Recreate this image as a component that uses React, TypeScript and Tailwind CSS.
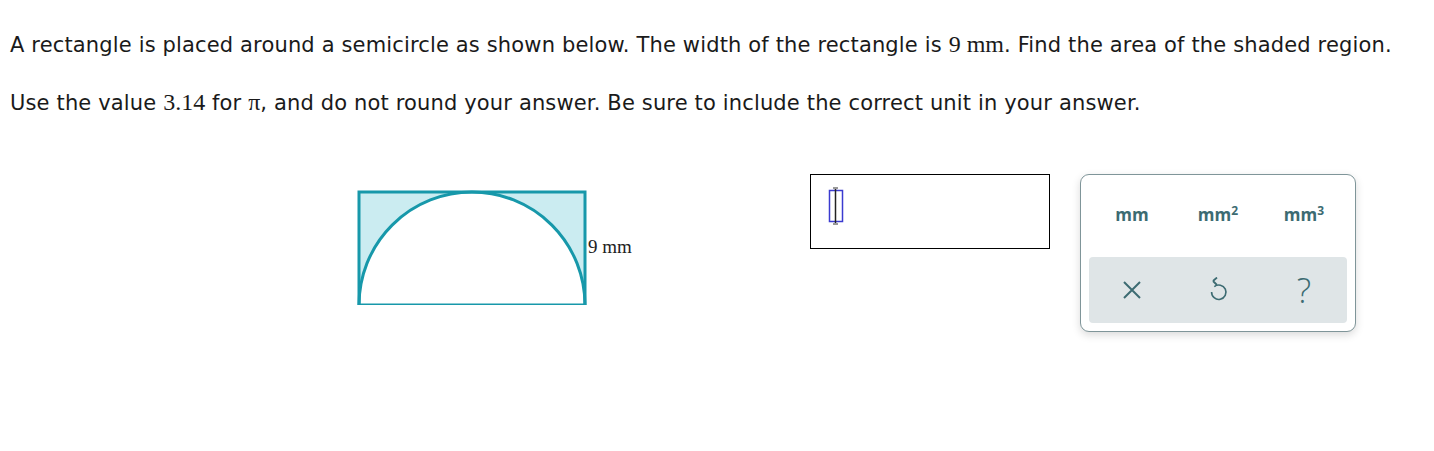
import React from 'react'

const Figure: React.FC = () => (
  <div className="relative w-[300px] h-[130px]">
    <svg width="240" height="130" viewBox="0 0 240 130" className="absolute left-0 top-0">
      <rect x="2" y="17" width="226" height="113" fill="#cbecf1" stroke="none" />
      <path d="M2,130 A113,113 0 0 1 228,130 Z" fill="#ffffff" />
      <rect x="2" y="17" width="226" height="113" fill="none" stroke="#1798aa" strokeWidth="3" />
      <path d="M2,130 A113,113 0 0 1 228,130" fill="none" stroke="#1798aa" strokeWidth="3" />
    </svg>
    <span className="absolute left-[231px] top-[58px] font-['Liberation_Serif',serif] text-[19px] text-[#222]">9 mm</span>
  </div>
)

const App: React.FC = () => {
  return (
    <div className="w-[1434px] h-[451px] bg-white font-['DejaVu_Sans',sans-serif] text-[#1a1a1a]">
      <div className="pl-[10px] pt-[29px] tracking-[0.15px]">
        <p className="text-[21px] leading-[30px]">
          A rectangle is placed around a semicircle as shown below. The width of the rectangle is{' '}
          <span className="font-['Liberation_Serif',serif] text-[24px] tracking-normal">9 mm</span>. Find the area of the shaded region.
        </p>
        <p className="mt-[27px] text-[21px] leading-[30px]">
          Use the value <span className="font-['Liberation_Serif',serif] text-[24px] tracking-normal">3.14</span> for{' '}
          <span className="font-['Liberation_Serif',serif] text-[24px] tracking-normal">π</span>, and do not round your answer. Be sure to include the correct unit in your answer.
        </p>
      </div>

      <div className="flex items-start mt-[55px]">
        <div className="ml-[357px] mt-[2px]">
          <Figure />
        </div>

        {/* answer box */}
        <div className="ml-[153px] mt-[1px] w-[240px] h-[75px] border border-black flex items-start pl-[16px] pt-[12px]">
          <svg width="18" height="38" viewBox="0 0 18 38">
            <line x1="6" y1="1" x2="11" y2="1" stroke="#333" strokeWidth="1" />
            <line x1="6" y1="37" x2="11" y2="37" stroke="#333" strokeWidth="1" />
            <rect x="2.5" y="3.5" width="13" height="31" fill="none" stroke="#3b3bd0" strokeWidth="1.5" />
            <line x1="8.5" y1="2" x2="8.5" y2="36" stroke="#222" strokeWidth="1.5" />
          </svg>
        </div>

        {/* unit keypad */}
        <div className="ml-[30px] mt-[1px] w-[276px] h-[158px] rounded-[9px] border border-[#7f9599] bg-white shadow-[0_3px_8px_rgba(0,0,0,0.15)] px-[8px] pt-[20px] font-['Open_Sans',sans-serif]">
          <div className="grid grid-cols-3 h-[40px] items-center text-center text-[17px] font-bold text-[#3c6b72]">
            <span>mm</span>
            <span>
              mm<sup className="text-[12px] -top-[6px]">2</sup>
            </span>
            <span>
              mm<sup className="text-[12px] -top-[6px]">3</sup>
            </span>
          </div>
          <div className="mt-[22px] h-[66px] rounded-[4px] bg-[#dfe5e7] grid grid-cols-3 items-center justify-items-center text-[#3c6b72]">
            <svg width="22" height="22" viewBox="0 0 22 22">
              <path d="M3,3 L19,19 M19,3 L3,19" stroke="#3c6b72" strokeWidth="2" fill="none" />
            </svg>
            <svg width="22" height="26" viewBox="0 0 22 26">
              <path d="M6,4 L10,8 M6,4 L10,0.5" stroke="#3c6b72" strokeWidth="1.8" fill="none" />
              <path d="M7,4 A8,8 0 1 1 4,10" stroke="#3c6b72" strokeWidth="1.8" fill="none" transform="translate(1,6) scale(0.9)" />
            </svg>
            <span className="text-[34px] leading-none font-light text-[#3c6b72] font-['Open_Sans',sans-serif]">?</span>
          </div>
        </div>
      </div>
    </div>
  )
}

export default App
